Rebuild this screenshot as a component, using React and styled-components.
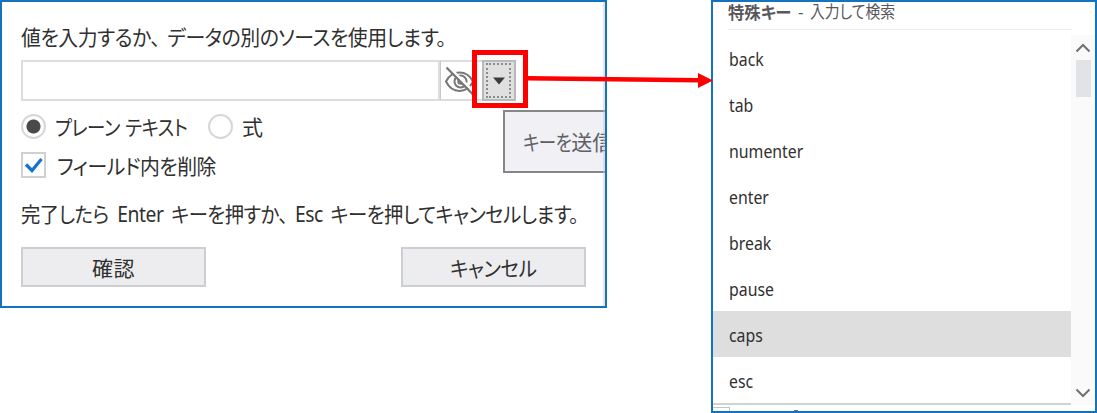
import React from "react";
import styled, { createGlobalStyle } from "styled-components";

const keys = [
  "back",
  "tab",
  "numenter",
  "enter",
  "break",
  "pause",
  "caps",
  "esc",
];

const HiddenEye = () => (
  <svg width="34" height="34" viewBox="0 0 34 34" fill="none" stroke="#77777a" strokeWidth="2">
    <path d="M4 17.500C10 5.500 25 5.500 31 17.500C25 30 10 30 4 17.500Z" />
    <circle cx="18.500" cy="17.500" r="6" />
    <circle cx="18.500" cy="17.500" r="2.2" />
    <path d="M6.500 2.500L33 29" stroke="#fff" strokeWidth="2.500" />
    <path d="M4.500 3.500L31.500 31" strokeWidth="2.300" />
  </svg>
);

const Chevron = ({ down }) => (
  <svg width="16" height="10" viewBox="0 0 16 10" fill="none" stroke="#707070" strokeWidth="2">
    <path d={down ? "M1.500 1.500L8 8L14.500 1.500" : "M1.500 8.500L8 2L14.500 8.500"} />
  </svg>
);

const App = () => {
  return (
    <Page>
      <GlobalStyle />
      <Dialog>
        <Prompt>
          <Text $spacing={-0.5} $scale={0.947}>
            値を入力するか<Comma>、</Comma>データの別のソースを使用します。
          </Text>
        </Prompt>
        <InputRow>
          <Input />
          <EyeCell>
            <HiddenEye />
          </EyeCell>
          <Dropdown>
            <DottedFocus>
              <svg width="12" height="8" viewBox="0 0 12 8">
                <path d="M0 0.500H12L6 7.500Z" fill="#3c3c3c" />
              </svg>
            </DottedFocus>
          </Dropdown>
        </InputRow>
        <RadioRow>
          <Radio $checked />
          <Label $width={162}>
            <Text $spacing={-0.5} $scale={0.875}>プレーン <Gap />テキスト</Text>
          </Label>
          <Radio />
          <Label>
            <Text>式</Text>
          </Label>
        </RadioRow>
        <CheckRow>
          <Checkbox>
            <svg width="20" height="20" viewBox="0 0 20 20">
              <path d="M2 9.500L8 15.500L17.500 4" fill="none" stroke="#1473d0" strokeWidth="3.200" />
            </svg>
          </Checkbox>
          <Label>
            <Text $spacing={-0.5} $scale={0.945}>フィールド内を削除</Text>
          </Label>
        </CheckRow>
        <Hint>
          <Text $spacing={-0.5} $scale={0.92}>
            完了したら <Latin>Enter</Latin> キーを押すか<Comma>、</Comma>
            <Latin>Esc</Latin> キーを押してキャンセルします。
          </Text>
        </Hint>
        <Actions>
          <Button>
            <Text $spacing={0.5} $origin="center">確認</Text>
          </Button>
          <Button>
            <Text $spacing={-0.5} $scale={0.93} $origin="center">キャンセル</Text>
          </Button>
        </Actions>
        <Tooltip>
          <Text $spacing={-0.5} $scale={0.83}>キーを</Text>
          <Text>送信</Text>
        </Tooltip>
        <DialogEdge />
      </Dialog>
      <KeyPanel>
        <KeyHeader>
          <HeaderName>
            <Text $size={17} $scale={0.96} $bold>特殊キー</Text>
          </HeaderName>
          <HeaderDash>-</HeaderDash>
          <Text $size={16.5} $scale={0.9}>入力して検索</Text>
        </KeyHeader>
        <KeyBody>
          <KeyList>
            {keys.map((key) => (
              <KeyItem key={key} $active={key === "caps"}>
                <KeyName>{key}</KeyName>
              </KeyItem>
            ))}
          </KeyList>
          <Scrollbar>
            <Chevron />
            <Thumb />
            <Chevron down />
          </Scrollbar>
        </KeyBody>
        <Behind>
          <BehindBox />
          <BehindMark />
        </Behind>
      </KeyPanel>
      <Highlight />
      <Arrow width="186" height="18" viewBox="0 0 186 18">
        <path d="M0 7.200L172 9.200" stroke="#fe0000" strokeWidth="4.500" />
        <path d="M171 2V17L186 9.500Z" fill="#fe0000" />
      </Arrow>
    </Page>
  );
};

export default App;

// CSS styling

const GlobalStyle = createGlobalStyle`
  body {
    margin: 0;
    background: #fff;
    overflow: hidden;
  }

  * {
    box-sizing: border-box;
  }
`;

const Page = styled.div`
  position: relative;
  display: flex;
  align-items: flex-start;
  justify-content: space-between;
  width: 1097px;
  height: 413px;
  overflow: hidden;
  font-family: "Noto Sans", "Noto Sans CJK JP", sans-serif;
  color: #303030;
`;

const Text = styled.span`
  display: inline-block;
  flex: none;
  font-family: "Noto Sans CJK JP", sans-serif;
  font-size: ${({ $size }) => $size || 21}px;
  font-weight: ${({ $bold }) => ($bold ? 700 : 400)};
  font-feature-settings: "palt";
  letter-spacing: ${({ $spacing }) => $spacing || 0}px;
  line-height: 1;
  white-space: nowrap;
  transform: scaleX(${({ $scale }) => $scale || 1});
  transform-origin: ${({ $origin }) => $origin || "left"};
`;

const Comma = styled.span`
  margin-right: 8px;
`;

const Gap = styled.span`
  margin-right: 2px;
`;

const Latin = styled.span`
  margin: 0 4px 0 5px;
  font-family: "Noto Sans", sans-serif;

  ${Comma} + & {
    margin-left: 0;
  }
`;

const Dialog = styled.div`
  position: relative;
  display: flex;
  flex-direction: column;
  width: 607px;
  height: 308px;
  padding: 17px 19px 0;
  border: 2px solid #1473be;
  overflow: hidden;
`;

const Prompt = styled.div`
  display: flex;
  align-items: center;
  height: 34px;
`;

const InputRow = styled.div`
  display: flex;
  height: 41px;
  margin-top: 7px;
`;

const Input = styled.div`
  width: 419px;
  border: 2px solid #dcddde;
`;

const EyeCell = styled.div`
  display: flex;
  align-items: center;
  width: 42px;
  padding-left: 1px;
  border: 2px solid #dcdddd;
  border-left: 1px solid #c8c9ca;
  border-right: none;
`;

const Dropdown = styled.div`
  width: 34px;
  padding: 1px 3px 1px 2px;
  border: 2px solid #b8b9ba;
  background: #e0e0e1;
`;

const DottedFocus = styled.div`
  display: flex;
  align-items: center;
  justify-content: center;
  width: 100%;
  height: 100%;
  border: 2px dotted #8c8c8c;
`;

const RadioRow = styled.div`
  display: flex;
  align-items: center;
  height: 26px;
  margin-top: 12px;
`;

const Radio = styled.div`
  flex: none;
  width: 25px;
  height: 25px;
  border: 2px solid #d6d6d8;
  border-radius: 50%;
  background: ${({ $checked }) =>
    $checked
      ? "radial-gradient(circle, #4a4a4a 6.5px, transparent 7.5px)"
      : "#fff"};
`;

const Label = styled.div`
  display: flex;
  flex: none;
  align-items: center;
  width: ${({ $width }) => ($width ? `${$width}px` : "auto")};
  padding-left: 9px;
`;

const CheckRow = styled.div`
  display: flex;
  align-items: center;
  height: 26px;
  margin-top: 13px;

  ${Label} {
    padding-left: 11px;
  }
`;

const Checkbox = styled.div`
  display: flex;
  align-items: center;
  justify-content: center;
  width: 25px;
  height: 26px;
  border: 2px solid #cfd0d2;
`;

const Hint = styled.div`
  display: flex;
  align-items: center;
  height: 32px;
  margin-top: 20px;
`;

const Actions = styled.div`
  display: flex;
  justify-content: space-between;
  width: 565px;
  margin-top: 17px;
`;

const Button = styled.div`
  display: flex;
  align-items: center;
  justify-content: center;
  width: 185px;
  height: 40px;
  border: 2px solid #cccfd1;
  background: #ededf0;
`;

const Tooltip = styled.div`
  position: absolute;
  left: 501px;
  top: 108px;
  display: flex;
  align-items: center;
  width: 140px;
  height: 63px;
  padding-left: 18px;
  border: 2px solid #848689;
  background: #f0f0f5;
  color: #606064;

  ${Text} + ${Text} {
    margin-left: -10px;
  }
`;

const DialogEdge = styled.div`
  position: absolute;
  top: 0;
  right: 0;
  bottom: 0;
  width: 2px;
  background: rgba(190, 196, 206, 0.45);
`;

const KeyPanel = styled.div`
  display: flex;
  flex-direction: column;
  width: 386px;
  height: 413px;
  border: 2px solid #1473be;
  overflow: hidden;
`;

const KeyHeader = styled.div`
  display: flex;
  align-items: center;
  width: 344px;
  height: 28px;
  margin: 0 0 5px 15px;
  padding-bottom: 9px;
  border-bottom: 1px solid #ececee;
  color: #58585c;
`;

const HeaderName = styled.div`
  display: flex;
  width: 70px;
`;

const HeaderDash = styled.span`
  width: 12px;
  font-size: 17px;
  line-height: 17px;
`;

const KeyBody = styled.div`
  display: flex;
  height: 370px;
`;

const KeyList = styled.div`
  width: 358px;
  border-bottom: 2px solid #cfd3d2;
`;

const KeyItem = styled.div`
  display: flex;
  align-items: center;
  height: 46px;
  padding: 1px 0 0 16px;
  background: ${({ $active }) => ($active ? "#dedede" : "transparent")};
`;

const KeyName = styled.span`
  font-size: 18px;
  line-height: 24px;
  transform: scaleX(0.88);
  transform-origin: left;
`;

const Scrollbar = styled.div`
  display: flex;
  flex: 1;
  flex-direction: column;
  align-items: center;
  padding: 8px 0 7px;
  background: #fafafa;

  svg:last-child {
    margin-top: auto;
  }
`;

const Thumb = styled.div`
  width: 15px;
  height: 37px;
  margin-top: 7px;
  background: #e2e3e4;
`;

const Behind = styled.div`
  display: flex;
  align-items: flex-end;
  gap: 64px;
  height: 6px;
`;

const BehindBox = styled.div`
  width: 17px;
  height: 4px;
  border: 1px solid #c4c5c7;
  border-width: 1px 1px 0 0;
`;

const BehindMark = styled.div`
  width: 4px;
  height: 1px;
  background: #6c7684;
`;

const Highlight = styled.div`
  position: absolute;
  left: 472px;
  top: 50px;
  width: 56px;
  height: 58px;
  border: 5px solid #fe0000;
`;

const Arrow = styled.svg`
  position: absolute;
  left: 527px;
  top: 71px;
`;
